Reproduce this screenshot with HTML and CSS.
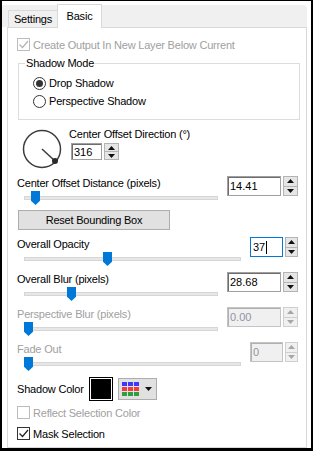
FILE: index.html
```html
<!DOCTYPE html>
<html lang="en">
<head>
  <meta charset="UTF-8" />
  <title>Drop Shadow - Basic</title>
  <link rel="stylesheet" href="styles.css">
</head>
<body>
  <div class="window">
    <!-- Tab strip -->
    <div class="tabs">
      <div class="tab">Settings</div>
      <div class="tab active">Basic</div>
    </div>

    <div class="panel">
      <label class="check disabled">
        <span class="box"><svg width="11" height="11" viewBox="0 0 11 11"><path d="M1.5 5.5l3 3 5.5-6.5" /></svg></span>
        Create Output In New Layer Below Current
      </label>

      <fieldset class="group">
        <legend>Shadow Mode</legend>
        <label class="radio on"><span class="ring"></span>Drop Shadow</label>
        <label class="radio"><span class="ring"></span>Perspective Shadow</label>
      </fieldset>

      <!-- Direction dial -->
      <div class="dial-row">
        <svg class="dial" width="40" height="40" viewBox="0 0 40 40">
          <circle cx="20" cy="20" r="18.5" />
          <line x1="20" y1="20" x2="33" y2="32" />
          <circle class="knob" cx="33" cy="32" r="3" />
        </svg>
        <div class="dial-side">
          <div class="label">Center Offset Direction (°)</div>
          <div class="spin tiny">
            <div class="field">316</div>
            <div class="arrows">
              <span class="arr"><svg width="7" height="4"><path d="M0 4h7L3.5 0z"/></svg></span>
              <span class="arr"><svg width="7" height="4"><path d="M0 0h7L3.5 4z"/></svg></span>
            </div>
          </div>
        </div>
      </div>

      <div class="srow first">
        <div>
          <div class="label">Center Offset Distance (pixels)</div>
          <div class="slider"><div class="track"></div><div class="thumb" style="left:14px"></div></div>
        </div>
        <div class="spin">
          <div class="field">14.41</div>
          <div class="arrows">
            <span class="arr"><svg width="7" height="4"><path d="M0 4h7L3.5 0z"/></svg></span>
            <span class="arr"><svg width="7" height="4"><path d="M0 0h7L3.5 4z"/></svg></span>
          </div>
        </div>
      </div>

      <button class="reset">Reset Bounding Box</button>

      <div class="srow after-btn">
        <div>
          <div class="label">Overall Opacity</div>
          <div class="slider"><div class="track"></div><div class="thumb" style="left:86px"></div></div>
        </div>
        <div class="spin narrow">
          <div class="field focus">37<span class="caret"></span></div>
          <div class="arrows">
            <span class="arr"><svg width="7" height="4"><path d="M0 4h7L3.5 0z"/></svg></span>
            <span class="arr"><svg width="7" height="4"><path d="M0 0h7L3.5 4z"/></svg></span>
          </div>
        </div>
      </div>

      <div class="srow">
        <div>
          <div class="label">Overall Blur (pixels)</div>
          <div class="slider"><div class="track"></div><div class="thumb" style="left:50px"></div></div>
        </div>
        <div class="spin">
          <div class="field">28.68</div>
          <div class="arrows">
            <span class="arr"><svg width="7" height="4"><path d="M0 4h7L3.5 0z"/></svg></span>
            <span class="arr"><svg width="7" height="4"><path d="M0 0h7L3.5 4z"/></svg></span>
          </div>
        </div>
      </div>

      <div class="srow disabled">
        <div>
          <div class="label">Perspective Blur (pixels)</div>
          <div class="slider"><div class="track"></div><div class="thumb" style="left:7px"></div></div>
        </div>
        <div class="spin">
          <div class="field">0.00</div>
          <div class="arrows">
            <span class="arr"><svg width="7" height="4"><path d="M0 4h7L3.5 0z"/></svg></span>
            <span class="arr"><svg width="7" height="4"><path d="M0 0h7L3.5 4z"/></svg></span>
          </div>
        </div>
      </div>

      <div class="srow disabled">
        <div>
          <div class="label">Fade Out</div>
          <div class="slider"><div class="track"></div><div class="thumb" style="left:7px"></div></div>
        </div>
        <div class="spin narrow">
          <div class="field">0</div>
          <div class="arrows">
            <span class="arr"><svg width="7" height="4"><path d="M0 4h7L3.5 0z"/></svg></span>
            <span class="arr"><svg width="7" height="4"><path d="M0 0h7L3.5 4z"/></svg></span>
          </div>
        </div>
      </div>

      <!-- Shadow color -->
      <div class="color-row">
        <span class="color-label">Shadow Color</span>
        <span class="swatch"></span>
        <span class="palette">
          <svg width="17" height="14" viewBox="0 0 17 14">
            <rect x="0" y="0" width="5" height="4" fill="#3a3aff"/><rect x="6" y="0" width="5" height="4" fill="#3a3aff"/><rect x="12" y="0" width="5" height="4" fill="#3a3aff"/>
            <rect x="0" y="5" width="5" height="4" fill="#f03c3c"/><rect x="6" y="5" width="5" height="4" fill="#f03c3c"/><rect x="12" y="5" width="5" height="4" fill="#f03c3c"/>
            <rect x="0" y="10" width="5" height="4" fill="#2f9e3f"/><rect x="6" y="10" width="5" height="4" fill="#2f9e3f"/><rect x="12" y="10" width="5" height="4" fill="#2f9e3f"/>
          </svg>
          <svg class="drop" width="7" height="4"><path d="M0 0h7L3.5 4z"/></svg>
        </span>
      </div>

      <label class="check disabled reflect"><span class="box empty"></span>Reflect Selection Color</label>
      <label class="check mask">
        <span class="box"><svg width="11" height="11" viewBox="0 0 11 11"><path d="M1.5 5.5l3 3 5.5-6.5" /></svg></span>
        Mask Selection
      </label>
    </div>
  </div>
</body>
</html>
```

FILE: styles.css
```css
* {
  box-sizing: border-box;
}

body {
  margin: 0;
  background: #fff;
  font-family: "Liberation Sans", Arial, sans-serif;
  font-size: 11px;
  letter-spacing: -0.2px;
  color: #000;
}

.window {
  width: 313px;
  height: 451px;
  border-style: solid;
  border-color: #000;
  border-width: 1px 2px 3px 2px;
  display: flex;
  flex-direction: column;
  background: #fff;
}

/* Tabs */
.tabs {
  margin: 4px 4px 0 0;
  height: 22px;
  background: #f0f0f0;
  border-top-right-radius: 4px;
  display: flex;
  align-items: flex-end;
  padding-left: 6px;
}

.tab {
  width: 50px;
  height: 17px;
  border: 1px solid #d9d9d9;
  border-bottom: none;
  background: #f0f0f0;
  text-align: center;
  line-height: 14px;
  padding-top: 1px;
}

.tab.active {
  width: 45px;
  height: 24px;
  margin-left: -1px;
  margin-bottom: -1px;
  padding-top: 4px;
  background: #fff;
  position: relative;
  z-index: 1;
}

.panel {
  flex: 1;
  margin: 0 4px 0 5px;
  border: 1px solid #d9d9d9;
  padding: 9px 8px 0 9px;
  background: #fff;
}

/* Checkboxes */
.check {
  display: flex;
  align-items: center;
  height: 15px;
}

.box {
  width: 13px;
  height: 13px;
  border: 1px solid #333;
  margin-right: 3px;
  background: #fff;
  display: flex;
}

.box svg {
  fill: none;
  stroke: #222;
  stroke-width: 1.2;
}

.check.disabled {
  color: #a0a0a0;
}

.check.disabled .box {
  border-color: #bcbcbc;
}

.check.disabled .box svg {
  stroke: #b4b4b4;
}

.reflect {
  margin-top: 4px;
}

.mask {
  margin-top: 6px;
}

/* Group box */
.group {
  margin: 4px -2px 0 1px;
  border: 1px solid #dcdcdc;
  padding: 4px 14px 9px 14px;
  min-width: 0;
}

.group legend {
  padding: 0 1px;
  margin-left: -8px;
  line-height: 14px;
}

.radio {
  display: flex;
  align-items: center;
  height: 18px;
}

.ring {
  width: 13px;
  height: 13px;
  border: 1px solid #333;
  border-radius: 50%;
  margin-right: 3px;
  display: flex;
  align-items: center;
  justify-content: center;
}

.radio.on .ring::after {
  content: "";
  width: 7px;
  height: 7px;
  border-radius: 50%;
  background: #333;
}

/* Dial */
.dial-row {
  display: flex;
  margin-top: 7px;
}

.dial {
  margin: 2px 0 0 5px;
}

.dial circle {
  fill: none;
  stroke: #3c3c3c;
  stroke-width: 1.5;
}

.dial line {
  stroke: #3c3c3c;
  stroke-width: 1.5;
}

.dial .knob {
  fill: #2a2a2a;
  stroke: none;
}

.dial-side {
  margin-left: 7px;
}

.label {
  line-height: 14px;
  white-space: nowrap;
}

/* Spin boxes */
.spin {
  display: flex;
  gap: 2px;
  height: 20px;
}

.spin .field {
  width: 54px;
  border: 1px solid #a0a0a0;
  box-shadow: inset 1px 1px 0 #6d6d6d;
  padding-left: 2px;
  display: flex;
  align-items: center;
  background: #fff;
  letter-spacing: 0;
}

.spin .arrows {
  width: 15px;
  display: flex;
  flex-direction: column;
  border: 1px solid #b4b4b4;
}

.spin .arr {
  flex: 1;
  background: #e6e6e6;
  display: flex;
  align-items: center;
  justify-content: center;
}

.spin .arr + .arr {
  border-top: 1px solid #b4b4b4;
}

.spin .arr svg {
  fill: #111;
}

.spin.narrow .field {
  width: 33px;
}

.spin.narrow .arrows {
  width: 13px;
}

.spin.tiny {
  height: 17px;
  margin: 2px 0 0 2px;
}

.spin.tiny .field {
  width: 31px;
}

.field.focus {
  border-color: #0078d7;
  box-shadow: none;
}

.caret {
  width: 1px;
  height: 13px;
  background: #000;
  margin-left: 1px;
}

/* Slider rows */
.srow {
  display: grid;
  grid-template-columns: 1fr auto;
  column-gap: 2px;
  margin-top: 6px;
}

.srow.first,
.srow.after-btn {
  margin-top: 7px;
}

.slider {
  position: relative;
  height: 14px;
  margin-top: 1px;
  padding: 5px 7px 0;
}

.track {
  height: 4px;
  background: #e7e7e7;
  border: 1px solid #d6d6d6;
}

.thumb {
  position: absolute;
  top: 0;
  width: 9px;
  height: 14px;
  background: #0078d7;
  clip-path: polygon(0 0, 100% 0, 100% 70%, 50% 100%, 0 70%);
}

.srow.disabled .label {
  color: #a0a0a0;
}

.srow.disabled .field {
  background: #f0f0f0;
  border-color: #c4c4c4;
  box-shadow: inset 1px 1px 0 #b0b0b0;
  color: #8f93a8;
}

.srow.disabled .arrows {
  border-color: #cfcfcf;
}

.srow.disabled .arr {
  background: #f0f0f0;
}

.srow.disabled .arr + .arr {
  border-top-color: #cfcfcf;
}

.srow.disabled .arr svg {
  fill: #a6a6a6;
}

.reset {
  display: block;
  margin: 5px 0 0 1px;
  width: 152px;
  height: 20px;
  padding: 0;
  background: #e1e1e1;
  border: 1px solid #adadad;
  font: inherit;
  letter-spacing: inherit;
  color: #000;
}

/* Shadow color */
.color-row {
  display: flex;
  align-items: center;
  height: 24px;
  margin-top: 6px;
}

.color-label {
  width: 72px;
}

.swatch {
  width: 24px;
  height: 24px;
  border: 1px solid #000;
  background: #000;
  box-shadow: inset 0 0 0 1px #fff;
}

.palette {
  width: 39px;
  height: 22px;
  margin-left: 5px;
  background: #e1e1e1;
  border: 1px solid #adadad;
  display: flex;
  align-items: center;
  padding-left: 3px;
}

.palette .drop {
  margin-left: 6px;
  fill: #111;
}
```
